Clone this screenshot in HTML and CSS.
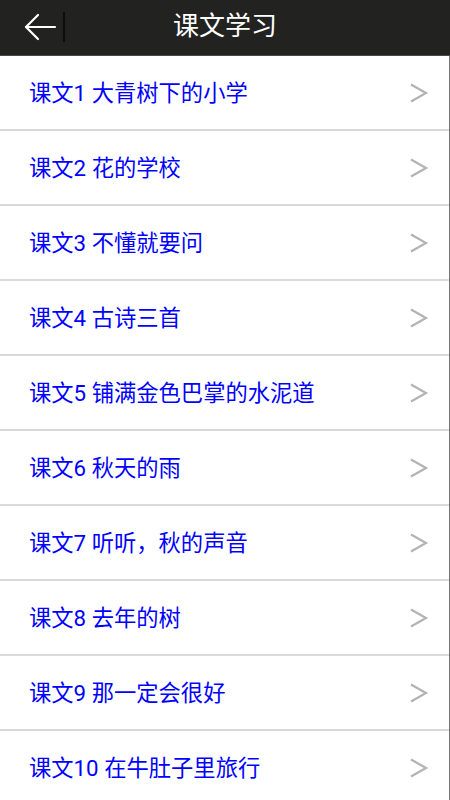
FILE: index.html
```html
<!DOCTYPE html>
<html lang="zh-CN">
<head>
  <meta charset="UTF-8" />
  <title>课文学习</title>
  <link rel="stylesheet" href="styles.css">
</head>
<body>
  <div class="header">
    <div class="back">
      <svg width="34" height="28" viewBox="0 0 34 28">
        <polyline points="15,2 3,14 15,26" fill="none" stroke="#fff" stroke-width="2.2" stroke-linecap="round" stroke-linejoin="round"/>
        <line x1="3" y1="14" x2="32" y2="14" stroke="#fff" stroke-width="2.2" stroke-linecap="round"/>
      </svg>
      <span class="sep"></span>
    </div>
    <h1 class="title">课文学习</h1>
  </div>

  <ul class="list">
    <li class="item"><span class="name">课文1 大青树下的小学</span><span class="chev"></span></li>
    <li class="item"><span class="name">课文2 花的学校</span><span class="chev"></span></li>
    <li class="item"><span class="name">课文3 不懂就要问</span><span class="chev"></span></li>
    <li class="item"><span class="name">课文4 古诗三首</span><span class="chev"></span></li>
    <li class="item"><span class="name">课文5 铺满金色巴掌的水泥道</span><span class="chev"></span></li>
    <li class="item"><span class="name">课文6 秋天的雨</span><span class="chev"></span></li>
    <li class="item"><span class="name">课文7 听听，秋的声音</span><span class="chev"></span></li>
    <li class="item"><span class="name">课文8 去年的树</span><span class="chev"></span></li>
    <li class="item"><span class="name">课文9 那一定会很好</span><span class="chev"></span></li>
    <li class="item"><span class="name">课文10 在牛肚子里旅行</span><span class="chev"></span></li>
  </ul>

  <script>
    // same chevron for every row
    const chevron = '<svg width="20" height="22" viewBox="0 0 20 22"><polyline points="2,2.5 17,11 2,19.5" fill="none" stroke="#b3b3b3" stroke-width="2.2"/></svg>';
    document.querySelectorAll('.chev').forEach(el => { el.innerHTML = chevron; });
  </script>
</body>
</html>
```

FILE: styles.css
```css
body {
  margin: 0;
  padding: 0;
  width: 450px;
  height: 800px;
  overflow: hidden;
  background-color: #fff;
  font-family: Roboto, "Noto Sans CJK SC", sans-serif;
}

.header {
  height: 55px;
  background-color: #222321;
  border-bottom: 1px solid #4a4a4a;
  display: flex;
  align-items: center;
  position: relative;
}

.back {
  display: flex;
  align-items: center;
  padding-left: 23px;
  height: 100%;
}

.back svg {
  display: block;
  margin-top: -1px;
}

.sep {
  width: 2px;
  height: 30px;
  background-color: #0c0c0c;
  margin-left: 6px;
  margin-top: -2px;
}

.title {
  position: absolute;
  left: 0;
  right: 0;
  top: 0;
  margin: 0;
  line-height: 52px;
  text-align: center;
  color: #fff;
  font-size: 26px;
  font-weight: normal;
  pointer-events: none;
}

.list {
  list-style: none;
  margin: 0;
  padding: 0;
  border-right: 1px solid #777;
  height: 744px;
}

.item {
  height: 73px;
  border-bottom: 2px solid #d9d9d9;
  display: flex;
  align-items: center;
  justify-content: space-between;
  padding: 0 20px 0 29px;
}

.name {
  color: #0000ff;
  font-size: 22.3px;
  margin-top: -4px;
}

.chev {
  display: flex;
  align-items: center;
}

.chev svg {
  display: block;
}
```
